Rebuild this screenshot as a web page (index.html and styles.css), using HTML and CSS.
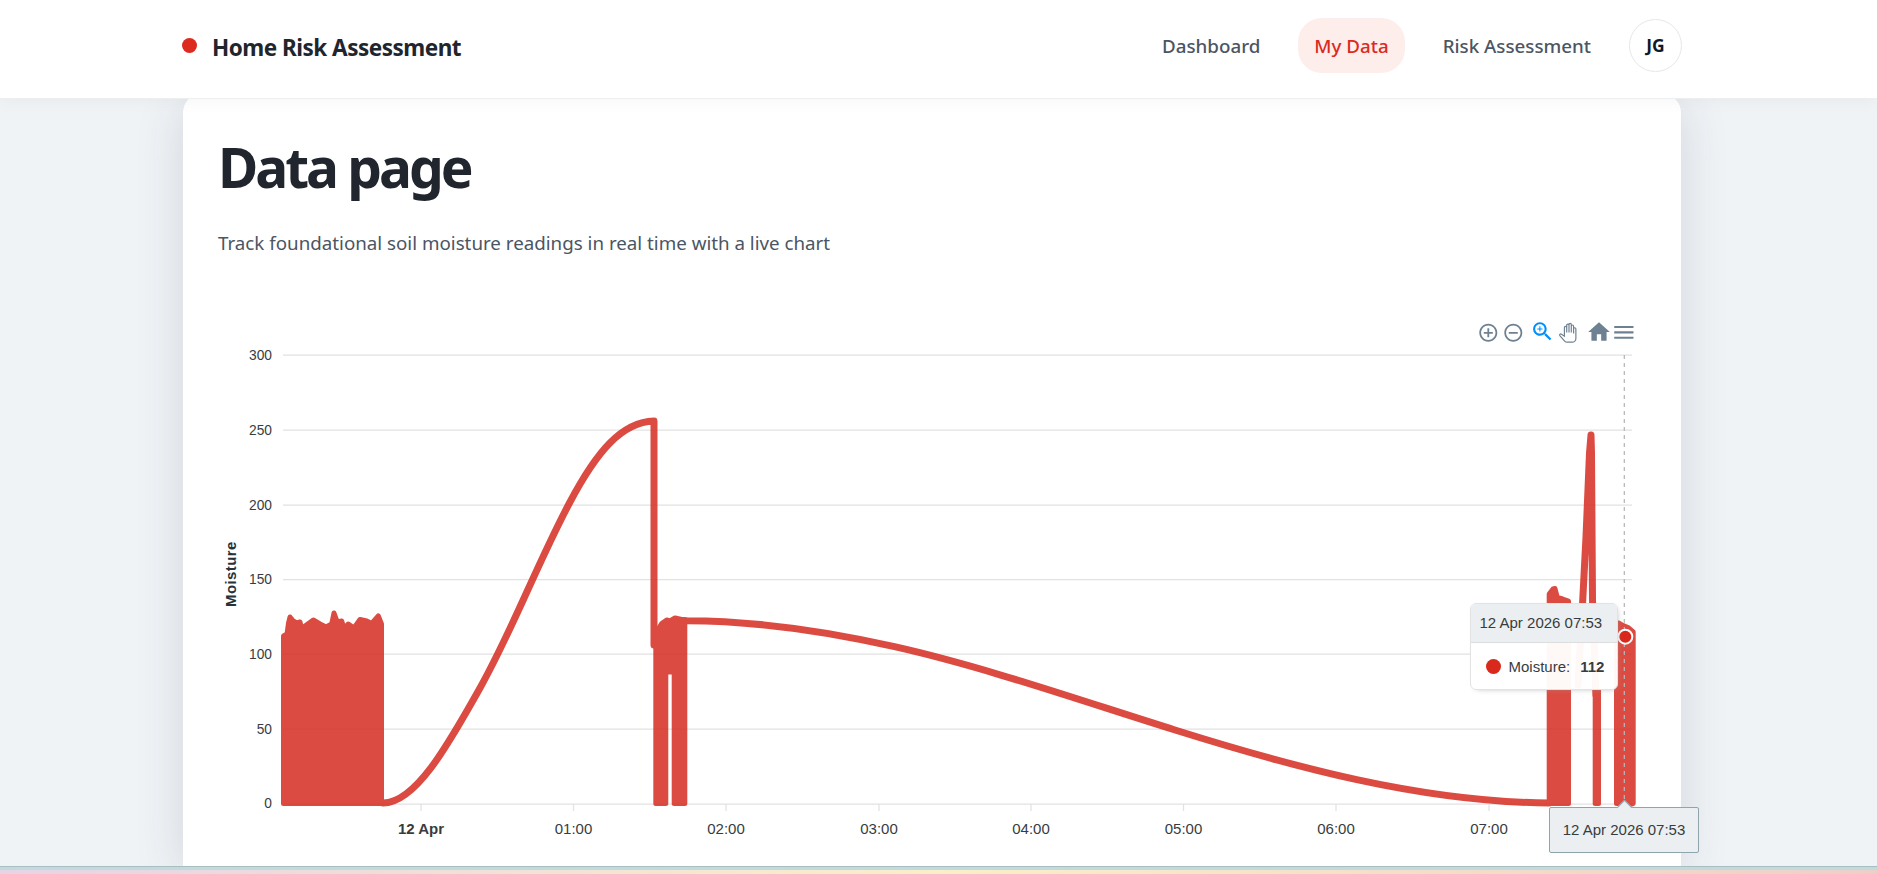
FILE: index.html
```html
<!DOCTYPE html>
<html lang="en">
<head>
    <meta charset="UTF-8">
    <meta name="viewport" content="width=device-width, initial-scale=1.0">
    <title>Home Risk Assessment</title>
    <link rel="stylesheet" href="styles.css">
</head>
<body>
    <!-- Navigation bar -->
    <div class="navbar">
        <div class="brand">
            <span class="brand-dot"></span>
            <span class="brand-name">Home Risk Assessment</span>
        </div>
        <div class="nav-links">
            <a class="nav-link" href="#">Dashboard</a>
            <a class="nav-link active" href="#">My Data</a>
            <a class="nav-link" href="#">Risk Assessment</a>
            <button class="avatar">JG</button>
        </div>
    </div>

    <!-- Main content -->
    <div class="page">
        <div class="card">
            <h1>Data page</h1>
            <p class="subtitle">Track foundational soil moisture readings in real time with a live chart</p>

            <div class="chart">
                <!-- viewBox keeps the page coordinates of the plot -->
                <svg class="chart-svg" width="1428" height="520" viewBox="218 320 1428 520">
                    <!-- Grid -->
                    <g class="grid">
                        <line x1="283" y1="355" x2="1632" y2="355"/>
                        <line x1="283" y1="430" x2="1632" y2="430"/>
                        <line x1="283" y1="505" x2="1632" y2="505"/>
                        <line x1="283" y1="579.5" x2="1632" y2="579.5"/>
                        <line x1="283" y1="654" x2="1632" y2="654"/>
                        <line x1="283" y1="729" x2="1632" y2="729"/>
                        <line x1="283" y1="804" x2="1632" y2="804"/>
                        <line x1="421" y1="804" x2="421" y2="811"/>
                        <line x1="573.5" y1="804" x2="573.5" y2="811"/>
                        <line x1="726" y1="804" x2="726" y2="811"/>
                        <line x1="879" y1="804" x2="879" y2="811"/>
                        <line x1="1031" y1="804" x2="1031" y2="811"/>
                        <line x1="1183.5" y1="804" x2="1183.5" y2="811"/>
                        <line x1="1336" y1="804" x2="1336" y2="811"/>
                        <line x1="1489" y1="804" x2="1489" y2="811"/>
                    </g>

                    <!-- Axis labels -->
                    <g class="y-labels">
                        <text x="272" y="360">300</text>
                        <text x="272" y="435">250</text>
                        <text x="272" y="510">200</text>
                        <text x="272" y="584">150</text>
                        <text x="272" y="659">100</text>
                        <text x="272" y="734">50</text>
                        <text x="272" y="808">0</text>
                    </g>
                    <g class="x-labels">
                        <text class="x-bold" x="421" y="834">12 Apr</text>
                        <text x="573.5" y="834">01:00</text>
                        <text x="726" y="834">02:00</text>
                        <text x="879" y="834">03:00</text>
                        <text x="1031" y="834">04:00</text>
                        <text x="1183.5" y="834">05:00</text>
                        <text x="1336" y="834">06:00</text>
                        <text x="1489" y="834">07:00</text>
                    </g>
                    <text class="y-title" transform="translate(236 607) rotate(-90)">Moisture</text>

                    <!-- Series -->
                    <g class="series">
                        <path class="series-line" d="M383 803 C415 803 447 747 480 688 C513 629 537 564 570 502 C597 451 622 422 654 421 L654 645"/>
                        <path class="series-line" d="M684 620.5 L687 620.7 C760 621 830 632 894.5 646.7 C985 667 1085 702 1175 730 C1290 766 1420 802 1549 803"/>
                        <path class="series-line" d="M1578 685 L1582.7 601 L1586 537 L1589.5 453 L1591 435 L1591.5 453 L1592.5 600 L1596 695"/>
                        <polygon class="series-block" points="283.5,636 287,634 288.5,623 290,617 293.3,621 296.7,623 300,622 302.7,633 305,626 313.3,620 320,624 326,627 331.7,624 334,613 337.3,622 341.7,621 344,629 348.3,624 354,628 360,619.5 366.7,621 371.7,623.5 378.3,616 381.5,624 381.5,803.5 283.5,803.5"/>
                        <polygon class="series-block" points="655.8,643 658.3,629 661.7,623.5 666.7,620 670,621 675,618 681.7,619.5 684.8,621 684.8,803.5 674.2,803.5 674.2,672 665.8,672 665.8,803.5 655.8,803.5"/>
                        <polygon class="series-block" points="1549.2,594 1553,589 1555,588.5 1557.3,597.5 1562.7,599 1568.5,601 1568.5,803.5 1549.2,803.5"/>
                        <polygon class="series-block" points="1595.2,690 1598.5,690 1598.5,803.5 1595.2,803.5"/>
                        <polygon class="series-block" points="1616.5,633 1618.5,623 1622,625 1628,627.5 1633.2,632 1633.2,803.5 1628,805 1624,801 1620,803.5 1616.5,803.5"/>
                    </g>

                    <!-- Crosshair and active point -->
                    <line class="crosshair" x1="1624.3" y1="355" x2="1624.3" y2="804"/>
                    <circle class="active-point" cx="1625.3" cy="636.7" r="7"/>

                    <!-- Toolbar -->
                    <svg class="tool" x="1477.5" y="322" width="21.6" height="21.6" viewBox="0 0 24 24">
                        <path d="M13 7h-2v4H7v2h4v4h2v-4h4v-2h-4V7zm-1-5C6.48 2 2 6.48 2 12s4.48 10 10 10 10-4.48 10-10S17.52 2 12 2zm0 18c-4.41 0-8-3.59-8-8s3.59-8 8-8 8 3.59 8 8-3.59 8-8 8z"/>
                    </svg>
                    <svg class="tool" x="1502.5" y="322" width="21.6" height="21.6" viewBox="0 0 24 24">
                        <path d="M7 11v2h10v-2H7zm5-9C6.48 2 2 6.48 2 12s4.48 10 10 10 10-4.48 10-10S17.52 2 12 2zm0 18c-4.41 0-8-3.59-8-8s3.59-8 8-8 8 3.59 8 8-3.59 8-8 8z"/>
                    </svg>
                    <svg class="tool-selected" x="1530" y="319" width="25" height="25" viewBox="0 0 24 24">
                        <path d="M15.5 14h-.79l-.28-.27C15.41 12.59 16 11.11 16 9.5 16 5.91 13.09 3 9.5 3S3 5.91 3 9.5 5.91 16 9.5 16c1.61 0 3.09-.59 4.23-1.57l.27.28v.79l5 4.99L20.49 19l-4.99-5zm-6 0C7.01 14 5 11.99 5 9.5S7.01 5 9.5 5 14 7.01 14 9.5 11.99 14 9.5 14z"/>
                        <path d="M12 10h-2v2H9v-2H7V9h2V7h1v2h2v1z"/>
                    </svg>
                    <svg class="tool-hand" x="1558" y="322" width="22" height="22" viewBox="0 0 24 24">
                        <path d="M7 20.5 L2 14.8 c-.8-1 .6-2.3 1.8-1.5 L7 15.5 V6 a1.25 1.25 0 0 1 2.5 0 V11.5 V3.5 a1.25 1.25 0 0 1 2.5 0 V11.5 V2.8 a1.25 1.25 0 0 1 2.5 0 V11.5 V4.5 a1.25 1.25 0 0 1 2.5 0 V12.5 V7.5 a1.25 1.25 0 0 1 2.5 0 V18 a4 4 0 0 1-4 4 H10.5 a4.5 4.5 0 0 1-3.5-1.5z"/>
                    </svg>
                    <svg class="tool" x="1586" y="319" width="26" height="26" viewBox="0 0 24 24">
                        <path d="M10 20v-6h4v6h5v-8h3L12 3 2 12h3v8z"/>
                    </svg>
                    <svg class="tool" x="1611" y="319.5" width="25.7" height="25.7" viewBox="0 0 24 24">
                        <path d="M3 18h18v-2H3v2zm0-5h18v-2H3v2zm0-7v2h18V6H3z"/>
                    </svg>
                </svg>

                <!-- Tooltip over the active point -->
                <div class="tooltip">
                    <div class="tooltip-title">12 Apr 2026 07:53</div>
                    <div class="tooltip-row">
                        <span class="tooltip-marker"></span>
                        <span class="tooltip-label">Moisture:</span>
                        <span class="tooltip-value">112</span>
                    </div>
                </div>
                <div class="x-tooltip">12 Apr 2026 07:53</div>
            </div>
        </div>
    </div>

    <!-- Bottom edge of the window -->
    <div class="window-edge"></div>
</body>
</html>
```

FILE: styles.css
```css
/* Reset default styles */
* {
    margin: 0;
    padding: 0;
    box-sizing: border-box;
}

body {
    height: 100vh;
    display: flex;
    flex-direction: column;
    overflow: hidden;
    background: #f0f3f6;
    font-family: "Noto Sans", sans-serif;
    color: #21252d;
}

/* Navigation bar */
.navbar {
    position: relative;
    z-index: 10;
    flex: none;
    height: 99px;
    padding: 0 195px 8px 182px;
    display: flex;
    justify-content: space-between;
    align-items: center;
    background: #fff;
    border-bottom: 1px solid #eceef0;
    box-shadow: 0 4px 14px rgba(0, 0, 0, 0.03);
}

.brand {
    display: flex;
    align-items: center;
    gap: 15px;
}

.brand-dot {
    width: 15px;
    height: 15px;
    border-radius: 50%;
    background: #dc2a1e;
}

.brand-name {
    margin-top: 4px;
    font-size: 22.5px;
    font-weight: 700;
    letter-spacing: -0.5px;
}

.nav-links {
    display: flex;
    align-items: center;
    gap: 22px;
}

.nav-link {
    height: 55px;
    padding: 0 16px;
    display: flex;
    align-items: center;
    border-radius: 24px;
    font-size: 18.75px;
    font-weight: 500;
    color: #4b5563;
    text-decoration: none;
}

.nav-link.active {
    background: #fdeeec;
    color: #dc2a1e;
}

.avatar {
    width: 53px;
    height: 53px;
    border: 1px solid #e5e7eb;
    border-radius: 50%;
    background: #fff;
    font-family: inherit;
    font-size: 17.5px;
    font-weight: 700;
    color: #111827;
}

/* Card */
.page {
    flex: 1;
    min-height: 0;
    padding: 0 196px 0 183px;
    overflow: hidden;
}

.card {
    height: calc(100% + 6px);
    margin-top: -6px;
    padding: 35px 35px 0;
    border-radius: 20px 20px 0 0;
    background: #fff;
    box-shadow: 0 8px 50px rgba(30, 41, 59, 0.14);
}

h1 {
    font-size: 55px;
    font-weight: 700;
    line-height: 78px;
    letter-spacing: -3px;
    color: #21252d;
}

.subtitle {
    margin-top: 23px;
    font-size: 18.75px;
    line-height: 28px;
    color: #4b5563;
}

/* Chart */
.chart {
    position: relative;
    margin-top: 63px;
    height: 520px;
}

.chart-svg {
    display: block;
    font-family: "Liberation Sans", Arial, sans-serif;
}

.grid line {
    stroke: #e2e2e2;
    stroke-width: 1.25;
}

.y-labels text {
    font-size: 13.75px;
    text-anchor: end;
    fill: #373d3f;
}

.x-labels text {
    font-size: 15px;
    text-anchor: middle;
    fill: #373d3f;
}

.x-labels .x-bold {
    font-weight: 700;
}

.y-title {
    font-size: 15px;
    font-weight: 700;
    letter-spacing: 0.4px;
    fill: #263238;
}

.series {
    opacity: 0.85;
}

.series-line {
    fill: none;
    stroke: #d62c20;
    stroke-width: 7;
    stroke-linejoin: round;
    stroke-linecap: round;
}

.series-block {
    fill: #d62c20;
    stroke: #d62c20;
    stroke-width: 5;
    stroke-linejoin: round;
}

.crosshair {
    stroke: #b6b6b6;
    stroke-width: 1.25;
    stroke-dasharray: 4 4;
}

.active-point {
    fill: #d9291c;
    stroke: #fff;
    stroke-width: 2;
}

.tool {
    fill: #6e8192;
}

.tool-selected {
    fill: #008ffb;
}

.tool-hand {
    fill: #fff;
    stroke: #6e8192;
    stroke-width: 1.3;
}

/* Tooltips */
.tooltip {
    position: absolute;
    left: 1251.5px;
    top: 283px;
    width: 148px;
    height: 87px;
    border: 1px solid #e3e3e3;
    border-radius: 6px;
    background: rgba(255, 255, 255, 0.96);
    box-shadow: 2px 2px 6px -4px #999;
    font-family: "Liberation Sans", Arial, sans-serif;
    font-size: 15px;
    color: #373d3f;
    overflow: hidden;
}

.tooltip-title {
    height: 39px;
    padding-left: 9px;
    line-height: 38px;
    background: #eceff1;
    border-bottom: 1px solid #ddd;
}

.tooltip-row {
    height: 47px;
    padding-left: 15px;
    display: flex;
    align-items: center;
}

.tooltip-marker {
    width: 15px;
    height: 15px;
    margin-right: 8px;
    border-radius: 50%;
    background: #d9291c;
}

.tooltip-value {
    margin-left: 10px;
    font-weight: 700;
}

.x-tooltip {
    position: absolute;
    left: 1331px;
    top: 487px;
    width: 150px;
    height: 46px;
    border: 1px solid #90a4ae;
    border-radius: 2px;
    background: #eceff1;
    font-family: "Liberation Sans", Arial, sans-serif;
    font-size: 15px;
    line-height: 44px;
    text-align: center;
    color: #373d3f;
}

.x-tooltip::before {
    content: '';
    position: absolute;
    left: 69px;
    top: -6px;
    width: 10px;
    height: 10px;
    background: #eceff1;
    border-top: 1px solid #90a4ae;
    border-left: 1px solid #90a4ae;
    transform: rotate(45deg);
}

/* Bottom edge of the window */
.window-edge {
    position: relative;
    z-index: 10;
    flex: none;
    height: 8px;
    border-top: 1px solid #a7bfc2;
    background:
        linear-gradient(#c3dadc, #c3dadc) top / 100% 3px no-repeat,
        linear-gradient(90deg, #e6d3e6, #f9efc9 50%, #eecfc8);
}
```
